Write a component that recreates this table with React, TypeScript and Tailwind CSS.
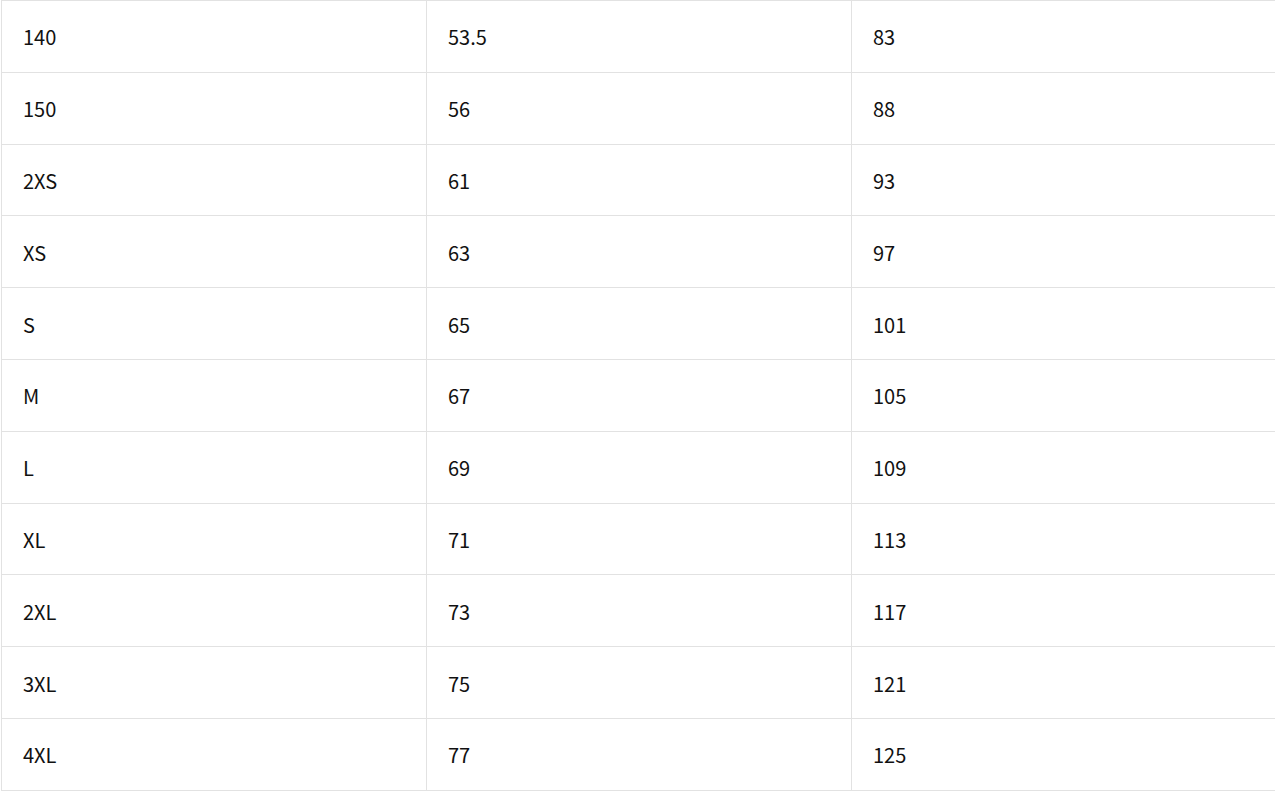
import React from 'react';

const rows: [string, string, string][] = [
  ['140', '53.5', '83'],
  ['150', '56', '88'],
  ['2XS', '61', '93'],
  ['XS', '63', '97'],
  ['S', '65', '101'],
  ['M', '67', '105'],
  ['L', '69', '109'],
  ['XL', '71', '113'],
  ['2XL', '73', '117'],
  ['3XL', '75', '121'],
  ['4XL', '77', '125'],
];

export default function App() {
  return (
    <div className="min-h-screen overflow-hidden bg-white pl-px font-['Noto_Sans_CJK_SC',sans-serif] text-[20px] text-[#111]">
      <table className="w-[1276px] table-fixed border-collapse">
        <tbody>
          {rows.map((r) => (
            <tr key={r[0]} className="h-[71.8px]">
              {r.map((c, i) => (
                <td key={i} className="border border-[#e2e2e2] pl-[21px] pt-[2px] align-middle">
                  {c}
                </td>
              ))}
            </tr>
          ))}
        </tbody>
      </table>
    </div>
  );
}
